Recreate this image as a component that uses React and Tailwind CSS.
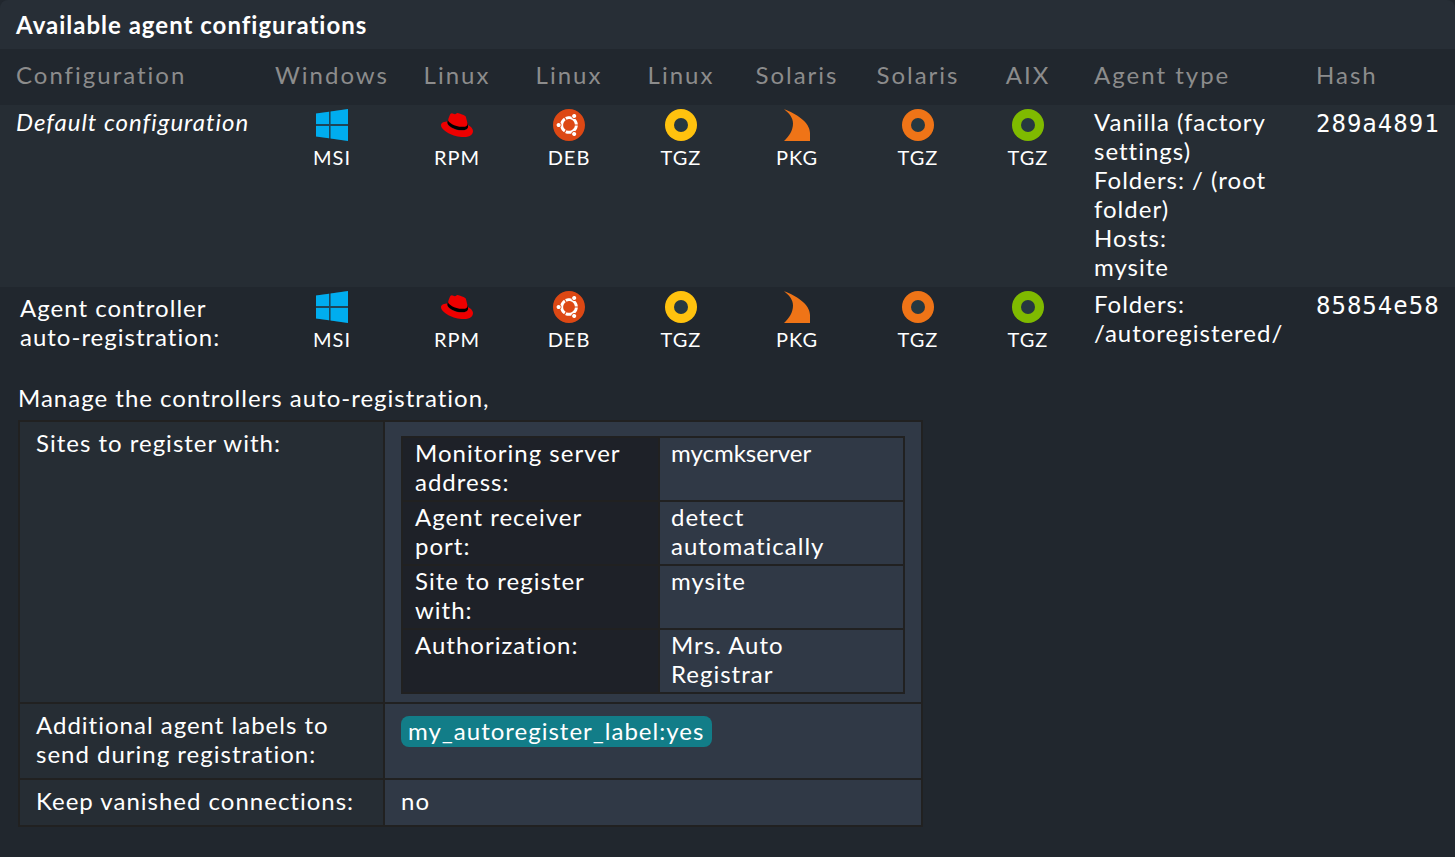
import { FaUbuntu } from "react-icons/fa";

function WindowsIcon() {
  return (
    <svg viewBox="0 0 32 32" className="size-8" aria-hidden="true">
      <path d="M0 4.4 32 0v32L0 27.6z" fill="#1f4658" />
      <path
        d="M0 4.6 13 2.8v12.1H0zM14.6 2.5 32 0v14.9H14.6zM0 16.9h13v12.3L0 27.4zM14.6 16.9H32V32l-17.4-2.5z"
        fill="#00adef"
      />
    </svg>
  );
}

function RedHatIcon() {
  return (
    <svg viewBox="0 0 24 24" className="size-8" aria-hidden="true">
      <path d="M5.4 7.9 19.8 10.5l.6 2.7c0 1.8-2 2.8-4.6 2.8C9.9 16 4.7 12.5 4.7 10.2z" fill="#000" />
      <path
        d="M16.009 13.386c1.577 0 3.86-.326 3.86-2.202a1.765 1.765 0 0 0-.04-.431l-.94-4.08c-.216-.898-.406-1.305-1.982-2.093-1.223-.625-3.888-1.658-4.676-1.658-.733 0-.947.946-1.822.946-.842 0-1.467-.706-2.255-.706-.757 0-1.25.515-1.63 1.576 0 0-1.06 2.99-1.197 3.424a.81.81 0 0 0-.028.245c0 1.162 4.577 4.974 10.71 4.974m4.101-1.435c.218 1.032.218 1.14.218 1.277 0 1.765-1.984 2.745-4.593 2.745-5.895.004-11.06-3.451-11.06-5.734a2.326 2.326 0 0 1 .19-.925C2.746 9.415 0 9.794 0 12.217c0 3.969 9.405 8.861 16.851 8.861 5.71 0 7.149-2.582 7.149-4.62 0-1.605-1.387-3.425-3.887-4.512"
        fill="#ee0000"
      />
    </svg>
  );
}

function UbuntuIcon() {
  return (
    <span className="block size-8 rounded-full bg-[radial-gradient(#fff_60%,transparent_61%)]">
      <FaUbuntu viewBox="0 8 496 496" className="block size-8 text-[#dd4814]" aria-hidden="true" />
    </span>
  );
}

function SolarisIcon() {
  return (
    <svg viewBox="0 0 32 32" className="size-8" aria-hidden="true">
      <path d="M3 0.2C15 4.5 29 13 29 24v8H3C8 27.5 12 21.5 12 14.5 12 8.500 8 4 3 .2z" fill="#ef7417" />
    </svg>
  );
}

function RingIcon({ color }) {
  return (
    <svg viewBox="0 0 32 32" className="size-8" aria-hidden="true">
      <circle cx="16" cy="16" r="16" fill={color} />
      <circle cx="16" cy="16" r="7" fill="#263840" />
    </svg>
  );
}

const packages = [
  { os: "Windows", format: "MSI", icon: <WindowsIcon /> },
  { os: "Linux", format: "RPM", icon: <RedHatIcon /> },
  { os: "Linux", format: "DEB", icon: <UbuntuIcon /> },
  { os: "Linux", format: "TGZ", icon: <RingIcon color="#ffc20e" /> },
  { os: "Solaris", format: "PKG", icon: <SolarisIcon /> },
  { os: "Solaris", format: "TGZ", icon: <RingIcon color="#ef7417" /> },
  { os: "AIX", format: "TGZ", icon: <RingIcon color="#7fba00" /> },
];

const siteRules = [
  { label: "Monitoring server address:", value: "mycmkserver", plain: true },
  { label: "Agent receiver port:", value: "detect automatically" },
  { label: "Site to register with:", value: "mysite" },
  { label: "Authorization:", value: "Mrs. Auto Registrar" },
];

function PackageCells() {
  return packages.map((p) => (
    <td key={p.os + p.format} className="py-1 text-center">
      <a href="#download" className="inline-flex flex-col items-center gap-1 text-[20px] leading-6">
        {p.icon}
        <span>{p.format}</span>
      </a>
    </td>
  ));
}

function SitesTable() {
  return (
    <table className="mt-2 w-full table-fixed border-collapse border-2 border-[#212121]">
      <colgroup>
        <col className="w-[257px]" />
        <col />
      </colgroup>
      <tbody>
        {siteRules.map((r) => (
          <tr key={r.label}>
            <th scope="row" className="border-2 border-[#212121] bg-[#1e2128] pr-8 pb-1 pl-3 text-left align-top font-normal">
              {r.label}
            </th>
            <td
              className={
                "border-2 border-[#212121] bg-[#303946] pr-14 pb-1 pl-[11px] " + (r.plain ? "tracking-normal" : "")
              }
            >
              {r.value}
            </td>
          </tr>
        ))}
      </tbody>
    </table>
  );
}

function DetailRow({ label, children }) {
  return (
    <tr>
      <th scope="row" className="border-2 border-[#212121] bg-[#262d34] pt-[6px] pr-4 pb-[10px] pl-4 text-left align-top font-normal">
        {label}
      </th>
      <td className="border-2 border-[#212121] bg-[#303946] px-4 pt-[6px] pb-2">{children}</td>
    </tr>
  );
}

export default function App() {
  return (
    <main className="min-h-screen bg-[#21272e] font-['Lato',sans-serif] text-[24px] leading-[29px] tracking-[1px] text-white">
      <h1 className="rounded-t-lg bg-[#272e36] px-4 py-[10px] font-bold">Available agent configurations</h1>
      <table className="w-full table-fixed border-collapse [&_td]:align-top">
        <colgroup>
          <col className="w-[260px]" />
          <col className="w-[144px]" />
          <col className="w-[106px]" />
          <col className="w-[118px]" />
          <col className="w-[106px]" />
          <col className="w-[126px]" />
          <col className="w-[116px]" />
          <col className="w-[104px]" />
          <col className="w-[222px]" />
          <col />
        </colgroup>
        <thead>
          <tr className="h-14 tracking-[2px] text-[#8c8c8c] [&_th]:pb-[6px]">
            <th className="pr-2 pl-4 text-left font-normal">Configuration</th>
            {packages.map((p) => (
              <th key={p.os + p.format} className="font-normal">
                {p.os}
              </th>
            ))}
            <th className="px-[14px] text-left font-normal">Agent type</th>
            <th className="px-[14px] text-left font-normal">Hash</th>
          </tr>
        </thead>
        <tbody>
          <tr className="bg-[#262d34]">
            <td className="pt-[2px] pb-[6px] pl-4 italic whitespace-nowrap">Default configuration</td>
            <PackageCells />
            <td className="px-[14px] pt-[2px] pb-[6px]">
              Vanilla (factory settings)
              <br />
              Folders: / (root folder)
              <br />
              Hosts:
              <br />
              mysite
            </td>
            <td className="px-[14px] pt-[5px] font-['DejaVu_Sans_Mono',monospace]">289a4891</td>
          </tr>
          <tr>
            <td className="pt-[6px] pr-8 pb-[10px] pl-5">Agent controller auto-registration:</td>
            <PackageCells />
            <td className="px-[14px] pt-[2px] pb-[6px]">
              Folders:
              <br />
              /autoregistered/
            </td>
            <td className="px-[14px] pt-[5px] font-['DejaVu_Sans_Mono',monospace]">85854e58</td>
          </tr>
          <tr>
            <td colSpan={10} className="px-[18px] pt-[22px] pb-[30px]">
              <p className="mb-2">Manage the controllers auto-registration,</p>
              <table className="w-[905px] max-w-full table-fixed border-collapse">
                <colgroup>
                  <col className="w-[365px]" />
                  <col />
                </colgroup>
                <tbody>
                  <DetailRow label="Sites to register with:">
                    <SitesTable />
                  </DetailRow>
                  <DetailRow label="Additional agent labels to send during registration:">
                    <span className="mt-[6px] inline-block rounded-lg bg-[#127d88] pr-2 pb-[2px] pl-[7px]">my_autoregister_label:yes</span>
                  </DetailRow>
                  <DetailRow label="Keep vanished connections:">no</DetailRow>
                </tbody>
              </table>
            </td>
          </tr>
        </tbody>
      </table>
    </main>
  );
}
